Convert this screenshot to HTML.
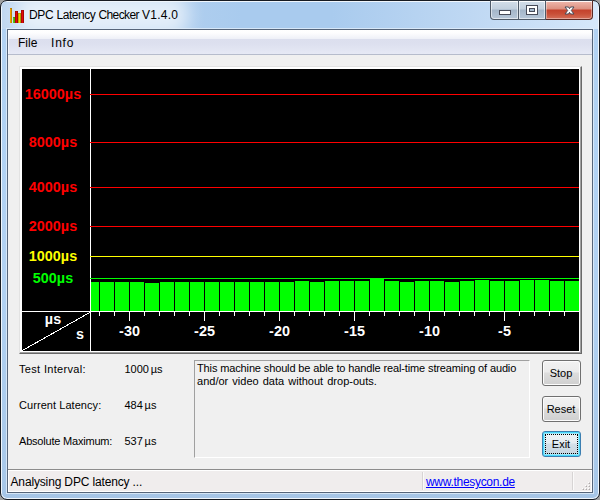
<!DOCTYPE html>
<html><head><meta charset="utf-8"><title>DPC Latency Checker V1.4.0</title>
<style>
html,body{margin:0;padding:0;width:600px;height:500px;overflow:hidden;background:#a0a0a0;}
body{font-family:"Liberation Sans",sans-serif;font-size:12px;color:#000;position:relative;}
.abs{position:absolute;}
#frame{position:absolute;left:0;top:0;width:598px;height:498px;border:1px solid #171b22;border-radius:7px;background:linear-gradient(180deg,#b2d2f3 0,#b1d1f2 300px,#a8c8e9 480px,#a6c5e6 100%);box-shadow:inset 0 0 0 1px #f0f6fc;overflow:hidden;}
#tgrad{position:absolute;left:1px;top:1px;width:596px;height:27px;overflow:hidden;background:linear-gradient(90deg,#c0d7f0 0,#bcd5f0 60px,#a9cbee 240px,#a9cbee 330px,#bfd8f3 470px,#cfe3f8 560px,#d6e8fa 100%);}
#glow{position:absolute;left:14px;top:-8px;width:172px;height:42px;background:rgba(255,255,255,.64);border-radius:14px;filter:blur(9px);}
#titletext{position:absolute;left:29px;top:8px;font-size:12px;line-height:15px;white-space:nowrap;letter-spacing:-0.3px;color:#000;}
#clientborder{position:absolute;left:7px;top:29px;width:584px;height:462px;border:1px solid #56657a;background:#f0f0f0;box-shadow:0 0 0 1px rgba(225,238,250,.8);}
#menu{position:absolute;left:0;top:0;width:584px;height:24px;border-bottom:1px solid #b6bccc;background:linear-gradient(180deg,#fff 0,#fdfdfe 3px,#eff1f8 8.5px,#dcdfee 9px,#dde0ef 14px,#e6e9f5 24px);box-shadow:inset 1px 0 0 rgba(255,255,255,.6);}
#caps{position:absolute;left:490px;top:0;width:103px;height:20px;}
.cb{position:absolute;top:0;height:18px;border:1px solid #4e5a68;border-top-color:#3a4450;background:linear-gradient(180deg,#d3dee9 0,#c2d0de 8px,#a4b6c9 9px,#b7c7d8 100%);box-shadow:inset 0 1px 0 rgba(255,255,255,.85),inset 0 0 0 1px rgba(255,255,255,.55);}
.cb.cl{background:linear-gradient(180deg,#efb9ae 0,#dc9080 8px,#c4422c 9px,#c95038 13px,#d4705a 100%);border-color:#5a2a24;border-top-color:#3a4450;box-shadow:inset 0 1px 0 rgba(255,255,255,.85),inset 0 0 0 1px rgba(255,255,255,.38);}
.mi{position:absolute;top:6px;font-size:12px;line-height:15px;white-space:nowrap;}
#chartwrap{position:absolute;left:11px;top:36px;width:561px;height:286px;background:#fff;border-style:solid;border-width:1px;border-color:#e3e3e3 #696969 #696969 #e3e3e3;box-shadow:inset -1px -1px 0 0 #a0a0a0;}
#chart{position:absolute;left:14px;top:39px;width:557px;height:282px;background:#000;display:block;}
.lbl{position:absolute;font-size:11px;line-height:14px;white-space:nowrap;}
.btn{position:absolute;width:37px;height:24px;border:1px solid #707070;border-radius:3px;background:linear-gradient(180deg,#f2f2f2 0,#ebebeb 11px,#dddddd 12px,#cfcfcf 100%);box-shadow:inset 0 0 0 1px #fcfcfc;font-size:11px;line-height:25px;text-align:center;text-indent:-1px;}
</style></head><body>
<div id="frame"><div id="tgrad"><div id="glow"></div></div></div>
<svg class="abs" style="left:9px;top:7px" width="16" height="16" shape-rendering="crispEdges"><rect x="1" y="1" width="1" height="15" fill="#f0a000"/><rect x="2" y="1" width="1" height="15" fill="#c48300"/><rect x="1" y="1" width="2" height="1" fill="#a87000" opacity=".6"/><rect x="4" y="10" width="1" height="6" fill="#58cc10"/><rect x="5" y="10" width="1" height="6" fill="#48a70d"/><rect x="4" y="10" width="2" height="1" fill="#3d8e0b" opacity=".6"/><rect x="6" y="4" width="1" height="12" fill="#b10606"/><rect x="7" y="4" width="1" height="12" fill="#e40808"/><rect x="8" y="4" width="1" height="12" fill="#a40505"/><rect x="6" y="4" width="3" height="1" fill="#9f0505" opacity=".6"/><rect x="9" y="6" width="1" height="10" fill="#bbab00"/><rect x="10" y="6" width="1" height="10" fill="#f0dc00"/><rect x="11" y="6" width="1" height="10" fill="#ac9e00"/><rect x="9" y="6" width="3" height="1" fill="#a89a00" opacity=".6"/><rect x="12" y="3" width="1" height="13" fill="#b10606"/><rect x="13" y="3" width="1" height="13" fill="#e40808"/><rect x="14" y="3" width="1" height="13" fill="#a40505"/><rect x="12" y="3" width="3" height="1" fill="#9f0505" opacity=".6"/></svg>
<div id="titletext">DPC <span style="letter-spacing:-0.45px">Latency</span> <span style="letter-spacing:-0.6px">Checker</span> <span style="letter-spacing:0.25px">V1.4.0</span></div>
<div id="caps">
<div class="cb" style="left:0;width:27px;border-radius:0 0 0 4px;"></div>
<div class="cb" style="left:29px;width:26px;border-left:0;"></div>
<div class="cb cl" style="left:56px;width:46px;border-left:0;border-radius:0 0 4px 0;"></div>
<svg class="abs" style="left:0;top:0" width="103" height="20" shape-rendering="crispEdges">
<rect x="9.5" y="10.5" width="11" height="4" fill="#fff" stroke="#474b58"/>
<rect x="36.5" y="5.5" width="11" height="9" fill="#fff" stroke="#474b58"/>
<rect x="39.5" y="8.5" width="5" height="3" fill="#a9bccf" stroke="#474b58"/>
<path d="M75 7L78.5 7L79.5 8.7L80.5 7L84 7L81.3 10.5L84 14L80.5 14L79.5 12.3L78.5 14L75 14L77.7 10.5Z" fill="#fff" stroke="#474b58" stroke-width="1" shape-rendering="geometricPrecision" stroke-linejoin="round"/>
</svg>
</div>
<div id="clientborder">
<div id="menu"><span class="mi" style="left:10px">File</span><span class="mi" style="left:43px;letter-spacing:0.8px">Info</span></div>
<div id="chartwrap"></div>
<svg id="chart" width="557" height="282" viewBox="0 0 557 282" shape-rendering="crispEdges" font-family="Liberation Sans, sans-serif" font-weight="bold" font-size="14.4px">
<g fill="#0f0"><rect x="69" y="213" width="8" height="29"/><rect x="78" y="213" width="14" height="29"/><rect x="93" y="213" width="14" height="29"/><rect x="108" y="213" width="14" height="29"/><rect x="123" y="214" width="14" height="28"/><rect x="138" y="213" width="14" height="29"/><rect x="153" y="213" width="14" height="29"/><rect x="168" y="213" width="14" height="29"/><rect x="183" y="213" width="14" height="29"/><rect x="198" y="213" width="14" height="29"/><rect x="213" y="213" width="14" height="29"/><rect x="228" y="213" width="14" height="29"/><rect x="243" y="213" width="14" height="29"/><rect x="258" y="213" width="14" height="29"/><rect x="273" y="212" width="14" height="30"/><rect x="288" y="213" width="14" height="29"/><rect x="303" y="212" width="14" height="30"/><rect x="318" y="212" width="14" height="30"/><rect x="333" y="212" width="14" height="30"/><rect x="348" y="209" width="14" height="33"/><rect x="363" y="212" width="14" height="30"/><rect x="378" y="213" width="14" height="29"/><rect x="393" y="212" width="14" height="30"/><rect x="408" y="212" width="14" height="30"/><rect x="423" y="213" width="14" height="29"/><rect x="438" y="212" width="14" height="30"/><rect x="453" y="211" width="14" height="31"/><rect x="468" y="212" width="14" height="30"/><rect x="483" y="212" width="14" height="30"/><rect x="498" y="211" width="14" height="31"/><rect x="513" y="211" width="14" height="31"/><rect x="528" y="212" width="14" height="30"/><rect x="543" y="212" width="14" height="30"/></g>
<rect x="68" y="0" width="1" height="282" fill="#fff"/>
<rect x="68" y="25" width="489" height="1" fill="#f00"/><rect x="68" y="73" width="489" height="1" fill="#f00"/><rect x="68" y="118" width="489" height="1" fill="#f00"/><rect x="68" y="157" width="489" height="1" fill="#f00"/><rect x="68" y="187" width="489" height="1" fill="#ff0"/><rect x="68" y="209" width="489" height="1" fill="#0f0"/>
<rect x="0" y="242" width="557" height="1" fill="#fff"/>
<line x1="0" y1="281.7" x2="68" y2="243.4" stroke="#fff" stroke-width="1"/>
<g fill="#fff"><rect x="77" y="243" width="1" height="4"/><rect x="92" y="243" width="1" height="4"/><rect x="107" y="243" width="1" height="9"/><rect x="122" y="243" width="1" height="4"/><rect x="137" y="243" width="1" height="4"/><rect x="152" y="243" width="1" height="4"/><rect x="167" y="243" width="1" height="4"/><rect x="182" y="243" width="1" height="9"/><rect x="197" y="243" width="1" height="4"/><rect x="212" y="243" width="1" height="4"/><rect x="227" y="243" width="1" height="4"/><rect x="242" y="243" width="1" height="4"/><rect x="257" y="243" width="1" height="9"/><rect x="272" y="243" width="1" height="4"/><rect x="287" y="243" width="1" height="4"/><rect x="302" y="243" width="1" height="4"/><rect x="317" y="243" width="1" height="4"/><rect x="332" y="243" width="1" height="9"/><rect x="347" y="243" width="1" height="4"/><rect x="362" y="243" width="1" height="4"/><rect x="377" y="243" width="1" height="4"/><rect x="392" y="243" width="1" height="4"/><rect x="407" y="243" width="1" height="9"/><rect x="422" y="243" width="1" height="4"/><rect x="437" y="243" width="1" height="4"/><rect x="452" y="243" width="1" height="4"/><rect x="467" y="243" width="1" height="4"/><rect x="482" y="243" width="1" height="9"/><rect x="497" y="243" width="1" height="4"/><rect x="512" y="243" width="1" height="4"/><rect x="527" y="243" width="1" height="4"/><rect x="542" y="243" width="1" height="4"/></g>
<g fill="#fff"><text x="107.5" y="267" text-anchor="middle">-30</text><text x="182.5" y="267" text-anchor="middle">-25</text><text x="257.5" y="267" text-anchor="middle">-20</text><text x="332.5" y="267" text-anchor="middle">-15</text><text x="407.5" y="267" text-anchor="middle">-10</text><text x="482.5" y="267" text-anchor="middle">-5</text></g>
<text x="31" y="30" text-anchor="middle" fill="#f00">16000µs</text><text x="31" y="78" text-anchor="middle" fill="#f00">8000µs</text><text x="31" y="123" text-anchor="middle" fill="#f00">4000µs</text><text x="31" y="162" text-anchor="middle" fill="#f00">2000µs</text><text x="31" y="192" text-anchor="middle" fill="#ff0">1000µs</text><text x="31" y="214" text-anchor="middle" fill="#0f0">500µs</text>
<text x="31" y="255" fill="#fff" text-anchor="middle">µs</text>
<text x="58" y="270" fill="#fff" text-anchor="middle">s</text>
</svg>
<div class="lbl" style="left:11px;top:332px;letter-spacing:0.33px">Test Interval:</div>
<div class="lbl" style="left:116.5px;top:332px;word-spacing:-1.3px">1000 µs</div>
<div class="lbl" style="left:11px;top:368px;letter-spacing:0.06px">Current Latency:</div>
<div class="lbl" style="left:116.5px;top:368px;word-spacing:-1.3px">484 µs</div>
<div class="lbl" style="left:11px;top:404px;letter-spacing:-0.2px">Absolute Maximum:</div>
<div class="lbl" style="left:116.5px;top:404px;word-spacing:-1.3px">537 µs</div>
<div class="abs" style="left:186px;top:330px;width:334px;height:96px;border:1px solid #a0a0a0;border-right-color:#fff;border-bottom-color:#fff;"></div>
<div class="lbl" style="left:189px;top:332px;line-height:13px;letter-spacing:-0.13px">This machine should be able to handle real-time streaming of audio<br><span style="letter-spacing:0.01px;word-spacing:1px">and/or video data without drop-outs.</span></div>
<div class="btn" style="left:534px;top:330px">Stop</div>
<div class="btn" style="left:534px;top:366px">Reset</div>
<div class="btn" style="left:534px;top:401px;border-color:#3c7fb1;box-shadow:inset 0 0 0 1px #48d8fb,inset 0 0 0 2px #9fe6fa;background:linear-gradient(180deg,#eef3f6 0,#e4ecf1 11px,#d3dfe8 12px,#c6d5df 100%)">Exit<div class="abs" style="left:2px;top:2px;width:31px;height:18px;border:1px dotted #000"></div></div>
<div class="abs" style="left:0;top:439px;width:584px;height:1px;background:#8c8c8c"></div>
<div class="abs" style="left:0;top:440px;width:584px;height:22px;background:#fff"></div>
<div class="abs" style="left:1px;top:441px;width:582px;height:20px;background:#f0eded"></div>
<div class="abs" style="left:414px;top:442px;width:1px;height:18px;background:#d7d4d4"></div><div class="abs" style="left:415px;top:442px;width:1px;height:18px;background:#fbfafa"></div>
<div class="abs" style="left:564px;top:442px;width:1px;height:18px;background:#d7d4d4"></div><div class="abs" style="left:565px;top:442px;width:1px;height:18px;background:#fbfafa"></div>
<svg class="abs" style="left:572px;top:450px" width="12" height="12" shape-rendering="crispEdges"><rect x="8" y="2" width="2" height="2" fill="#d9d5d5"/><rect x="8" y="2" width="1" height="1" fill="#fff"/><rect x="9" y="3" width="1" height="1" fill="#aeaaaa"/><rect x="5" y="5" width="2" height="2" fill="#d9d5d5"/><rect x="5" y="5" width="1" height="1" fill="#fff"/><rect x="6" y="6" width="1" height="1" fill="#aeaaaa"/><rect x="8" y="5" width="2" height="2" fill="#d9d5d5"/><rect x="8" y="5" width="1" height="1" fill="#fff"/><rect x="9" y="6" width="1" height="1" fill="#aeaaaa"/><rect x="2" y="8" width="2" height="2" fill="#d9d5d5"/><rect x="2" y="8" width="1" height="1" fill="#fff"/><rect x="3" y="9" width="1" height="1" fill="#aeaaaa"/><rect x="5" y="8" width="2" height="2" fill="#d9d5d5"/><rect x="5" y="8" width="1" height="1" fill="#fff"/><rect x="6" y="9" width="1" height="1" fill="#aeaaaa"/><rect x="8" y="8" width="2" height="2" fill="#d9d5d5"/><rect x="8" y="8" width="1" height="1" fill="#fff"/><rect x="9" y="9" width="1" height="1" fill="#aeaaaa"/></svg>
<div class="abs" style="left:2.5px;top:445px;font-size:12px;line-height:15px;white-space:nowrap;letter-spacing:-0.15px">Analysing DPC latency ...</div>
<div class="abs" style="left:418px;top:445px;font-size:12px;line-height:15px;white-space:nowrap;color:#0000ff;text-decoration:underline;letter-spacing:-0.3px">www.thesycon.de</div>
</div>
</body></html>
